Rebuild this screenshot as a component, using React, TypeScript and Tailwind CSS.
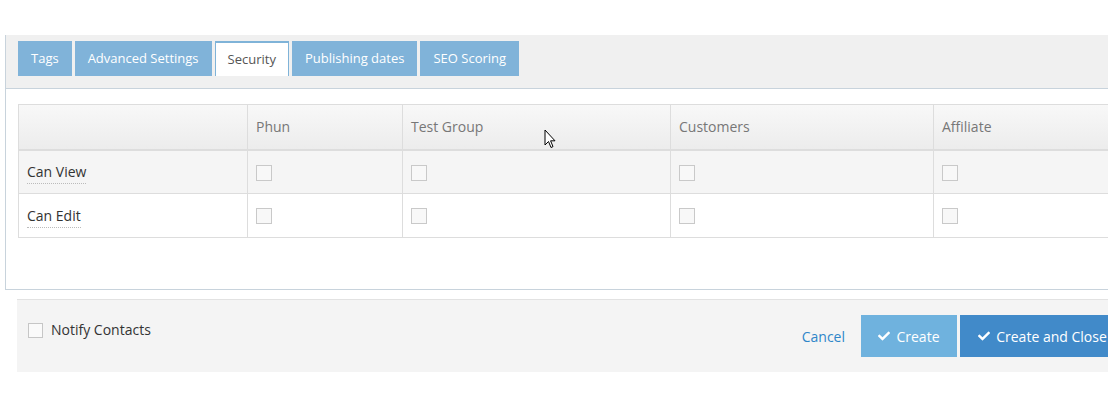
import { FaCheck } from "react-icons/fa";

const tabs = ["Tags", "Advanced Settings", "Security", "Publishing dates", "SEO Scoring"];

// column widths taken from the screen
const groups = [
  { name: "Phun", w: "w-[155px]" },
  { name: "Test Group", w: "w-[268px]" },
  { name: "Customers", w: "w-[263px]" },
  { name: "Affiliate", w: "w-[200px]" },
];

const perms = ["Can View", "Can Edit"];

const Box = () => (
  <span className="inline-block w-[16px] h-[16px] border border-[#c9c9c9] bg-[#f8f8f8] align-middle" />
);

export default function App() {
  return (
    <div
      className="relative w-[1108px] h-[412px] overflow-hidden bg-white text-[14px]"
      style={{ fontFamily: '"Open Sans", "Liberation Sans", sans-serif' }}
    >
      <div className="w-[1200px] pt-[35px]">
        {/* Tab panel */}
        <div className="ml-[5px] border-l border-b border-[#c8d3dc]">
          <div className="flex gap-[3px] h-[54px] bg-[#f0f0f0] border-b border-[#c8d3dc] pl-[12px] pt-[6px]">
            {tabs.map((t) =>
              t === "Security" ? (
                <div
                  key={t}
                  className="h-[35px] px-[12px] flex items-center bg-white border border-[#7fb3d8] border-t-2 border-b-0 text-[13px] text-[#555]"
                >
                  {t}
                </div>
              ) : (
                <div
                  key={t}
                  className="h-[35px] px-[13px] flex items-center bg-[#80b3d9] text-[13px] text-white"
                >
                  {t}
                </div>
              )
            )}
          </div>

          <div className="pt-[15px] pl-[12px] pb-[51px]">
            <table className="border-collapse">
              <thead>
                <tr className="h-[45px] bg-gradient-to-b from-[#f8f8f8] to-[#ececec]">
                  <th className="w-[229px] border border-[#dddddd] border-b-2" />
                  {groups.map((g) => (
                    <th
                      key={g.name}
                      className={`${g.w} border border-[#dddddd] border-b-2 pl-[8px] pb-[1px] text-left font-normal text-[#777]`}
                    >
                      {g.name}
                    </th>
                  ))}
                </tr>
              </thead>
              <tbody>
                {perms.map((p, i) => (
                  <tr key={p} className={`h-[44px] ${i === 0 ? "bg-[#f5f5f5]" : "bg-white"}`}>
                    <td className="border border-[#dddddd] pl-[8px]">
                      <span className="border-b border-dotted border-[#bbb] text-[#333] pb-[2px]">{p}</span>
                    </td>
                    {groups.map((g) => (
                      <td key={g.name} className="border border-[#dddddd] pl-[8px] pb-[2px]">
                        <Box />
                      </td>
                    ))}
                  </tr>
                ))}
              </tbody>
            </table>
          </div>
        </div>

        {/* Footer */}
        <div className="ml-[17px] mt-[9px] w-[1123px] h-[73px] bg-[#f4f4f4] border-t border-[#e2e2e2] flex items-start justify-between pt-[15px] pr-[15px]">
          <label className="flex items-center gap-[8px] ml-[11px] mt-[6px] text-[#333]">
            <span className="inline-block w-[15px] h-[15px] border border-[#c6c6c6] bg-[#fafafa]" />
            <span className="-mt-[2px]">Notify Contacts</span>
          </label>
          <div className="flex items-center">
            <span className="text-[#2e86c9] mr-[16px]">Cancel</span>
            <button className="h-[42px] w-[96px] bg-[#6fb2de] text-white flex items-center justify-center gap-[6px]">
              <FaCheck className="w-[12px] h-[12px]" />
              Create
            </button>
            <button className="h-[42px] w-[165px] ml-[3px] bg-[#418ac9] text-white flex items-center justify-center gap-[6px]">
              <FaCheck className="w-[12px] h-[12px]" />
              Create and Close
            </button>
          </div>
        </div>
      </div>

      {/* mouse pointer */}
      <svg className="absolute left-[544px] top-[129px]" width="12" height="20" viewBox="0 0 12 20">
        <path d="M1 1 L1 16 L4.5 12.5 L7 18.5 L9 17.6 L6.6 11.8 L11 11.8 Z" fill="white" stroke="black" strokeWidth="1" strokeLinejoin="round" />
      </svg>
    </div>
  );
}
